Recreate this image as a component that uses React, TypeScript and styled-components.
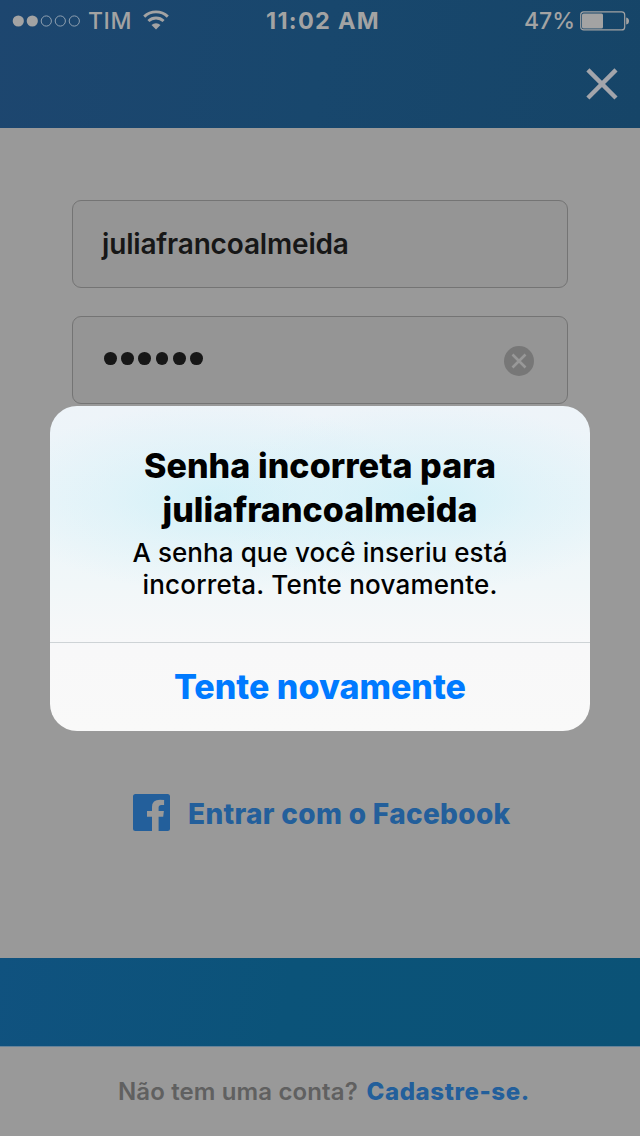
import React from "react";
import styled, { createGlobalStyle } from "styled-components";

const GlobalStyle = createGlobalStyle`
  * { box-sizing: border-box; }
  body { margin: 0; background: #999; }
`;

const Screen = styled.div`
  position: relative;
  display: flex;
  flex-direction: column;
  width: 640px;
  height: 1136px;
  overflow: hidden;
  background: #999;
  font-family: Inter, "Liberation Sans", sans-serif;
`;

const Header = styled.header`
  display: flex;
  flex-direction: column;
  height: 128px;
  background: linear-gradient(100deg, #1d466f 0%, #18476d 50%, #164568 100%);
`;

const StatusBar = styled.div`
  display: grid;
  grid-template-columns: 1fr auto 1fr;
  align-items: center;
  height: 41px;
  padding: 0 10px 0 12px;
  color: #a3a3a3;
`;

const StatusGroup = styled.div<{ $end?: boolean }>`
  display: flex;
  align-items: center;
  justify-content: ${(p) => (p.$end ? "flex-end" : "flex-start")};
`;

const StatusText = styled.span<{ $spacing?: number }>`
  font-size: 23px;
  font-weight: 500;
  letter-spacing: ${(p) => p.$spacing ?? 0}px;
  line-height: 40px;
  white-space: nowrap;
`;

const Clock = styled.span`
  padding-left: 4px;
  font-size: 23.5px;
  font-weight: 700;
  letter-spacing: 1.25px;
  line-height: 40px;
  white-space: nowrap;
`;

const Signal = styled.svg`
  width: 69px;
  height: 12px;
  margin-right: 7px;
`;

const Wifi = styled.svg`
  width: 26px;
  height: 20px;
  margin-left: 11px;
  margin-bottom: 1px;
`;

const Battery = styled.svg`
  width: 50px;
  height: 20px;
  margin-left: 5px;
`;

const HeaderActions = styled.div`
  display: flex;
  justify-content: flex-end;
  padding: 27px 22px 0 0;
`;

const CloseIcon = styled.svg`
  width: 32px;
  height: 32px;
`;

const Form = styled.main`
  display: flex;
  flex-direction: column;
  align-items: center;
  height: 830px;
  padding-top: 72px;
`;

const Field = styled.div`
  display: flex;
  align-items: center;
  justify-content: space-between;
  width: 496px;
  height: 88px;
  margin-bottom: 28px;
  padding: 0 33px 0 29px;
  border: 1px solid #747474;
  border-radius: 9px;
  background: #959595;
`;

const FieldValue = styled.span`
  color: #171717;
  font-size: 28px;
  font-weight: 600;
  letter-spacing: -0.17px;
  line-height: 34px;
  padding-bottom: 1px;
`;

const PasswordDots = styled.div`
  display: flex;
  gap: 4.4px;
  padding: 0 0 3px 2px;
`;

const Dot = styled.i`
  width: 12.8px;
  height: 12.8px;
  border-radius: 50%;
  background: #171717;
`;

const ClearIcon = styled.svg`
  width: 30px;
  height: 30px;
  margin-top: 1px;
`;

const FacebookLogin = styled.div`
  display: flex;
  align-items: center;
  gap: 17px;
  width: 374px;
  height: 38px;
  margin-top: 361px;
`;

const FacebookIcon = styled.svg`
  flex: none;
  width: 37px;
  height: 37px;
`;

const FacebookLabel = styled.span`
  color: #235f9b;
  font-size: 28px;
  font-weight: 800;
  letter-spacing: 0.32px;
  line-height: 34px;
  white-space: nowrap;
  padding: 4px 0 0 1px;
`;

const BlueBand = styled.div`
  height: 88px;
  background: linear-gradient(100deg, #10527f 0%, #0b5379 45%, #0b5276 100%);
`;

const Footer = styled.footer`
  display: flex;
  align-items: baseline;
  height: 90px;
  padding: 30px 0 0 118px;
  border-top: 1px solid #66839a;
  font-size: 24px;
  line-height: 30px;
  white-space: nowrap;
`;

const FooterText = styled.span`
  width: 248.5px;
  color: #606060;
  font-weight: 600;
  letter-spacing: 0.13px;
`;

const FooterLink = styled.span`
  color: #235f9b;
  font-weight: 800;
  letter-spacing: 0.6px;
`;

const Alert = styled.section`
  position: absolute;
  left: 50px;
  top: 406px;
  display: flex;
  flex-direction: column;
  width: 540px;
  height: 325px;
  overflow: hidden;
  border-radius: 27px;
  text-align: center;
  background:
    radial-gradient(ellipse 215px 95px at 375px 92px, rgba(205, 240, 248, 0.8), rgba(210, 240, 248, 0.4) 50%, rgba(225, 243, 249, 0)),
    radial-gradient(ellipse 215px 95px at 165px 92px, rgba(205, 240, 248, 0.8), rgba(210, 240, 248, 0.4) 50%, rgba(225, 243, 249, 0)),
    linear-gradient(#eef4f9 0%, #ebf5f9 30%, #f1f7f9 55%, #f8f8f9 75%, #f9f9f9 100%);
`;

const AlertBody = styled.div`
  display: flex;
  flex-direction: column;
  height: 237px;
  padding-top: 38px;
  border-bottom: 1px solid #ced3d6;
`;

const AlertTitle = styled.div<{ $spacing: number }>`
  color: #000;
  font-size: 34px;
  font-weight: 800;
  letter-spacing: ${(p) => p.$spacing}px;
  line-height: 44px;
`;

const AlertMessage = styled.div<{ $spacing: number }>`
  color: #000;
  font-size: 26px;
  font-weight: 500;
  letter-spacing: ${(p) => p.$spacing}px;
  line-height: 32px;
  position: relative;
  top: 5px;
`;

const AlertButton = styled.div`
  color: #007aff;
  font-size: 34px;
  font-weight: 800;
  letter-spacing: 0;
  line-height: 88px;
`;

export default function App() {
  return (
    <>
      <GlobalStyle />
      <Screen>
        <Header>
          <StatusBar>
            <StatusGroup>
              <Signal viewBox="0 0 69 12">
                {[0, 1].map((i) => (
                  <circle key={i} cx={6.3 + i * 14} cy={6} r={5.6} fill="#a3a3a3" />
                ))}
                {[2, 3, 4].map((i) => (
                  <circle key={i} cx={6.3 + i * 14} cy={6} r={5.1} fill="none" stroke="#8fa0b0" strokeWidth={1} />
                ))}
              </Signal>
              <StatusText $spacing={0.6}>TIM</StatusText>
              <Wifi viewBox="0 0 26 20">
                <path d="M1.2 6.6 A17.2 17.2 0 0 1 24.8 6.6" fill="none" stroke="#a3a3a3" strokeWidth="2.9" />
                <path d="M5.4 11 A11.2 11.2 0 0 1 20.6 11" fill="none" stroke="#a3a3a3" strokeWidth="2.9" />
                <path d="M8.5 15 A6.6 6.6 0 0 1 17.5 15 L13 19.4 Z" fill="#a3a3a3" />
              </Wifi>
            </StatusGroup>
            <Clock>11:02 AM</Clock>
            <StatusGroup $end>
              <StatusText>47%</StatusText>
              <Battery viewBox="0 0 50 20">
                <rect x="0.7" y="0.9" width="44" height="18" rx="3" fill="none" stroke="#a3a3a3" strokeWidth="1.2" />
                <rect x="2" y="2.4" width="21" height="15" rx="1.5" fill="#a3a3a3" />
                <path d="M46.2 6.5 Q49 7 49 10 Q49 13 46.2 13.5 Z" fill="#a3a3a3" />
              </Battery>
            </StatusGroup>
          </StatusBar>
          <HeaderActions>
            <CloseIcon viewBox="0 0 32 32">
              <path d="M1.9 1.9 L30 30 M30 1.9 L1.9 30" stroke="#a3a5ab" strokeWidth="4.4" />
            </CloseIcon>
          </HeaderActions>
        </Header>

        <Form>
          <Field>
            <FieldValue>juliafrancoalmeida</FieldValue>
          </Field>
          <Field>
            <PasswordDots>
              {Array.from({ length: 6 }, (_, i) => (
                <Dot key={i} />
              ))}
            </PasswordDots>
            <ClearIcon viewBox="0 0 30 30">
              <circle cx="15" cy="15" r="15" fill="#777" />
              <path d="M8.5 8.5 L21.5 21.5 M21.5 8.5 L8.5 21.5" stroke="#989898" strokeWidth="2.6" />
            </ClearIcon>
          </Field>
          <FacebookLogin>
            <FacebookIcon viewBox="0 0 37 37">
              <path
                d="M2.5 0 H34.5 Q37 0 37 2.5 V34.5 Q37 37 34.5 37 H25.6 V22.7 H30.2 L30.9 17.1 H25.6 V13.6 Q25.6 11 28.4 11 H31.1 V6 Q29.4 5.8 27 5.8 Q19 5.8 19 13 V17.1 H14 V22.7 H19 V37 H2.5 Q0 37 0 34.5 V2.5 Q0 0 2.5 0 Z"
                fill="#235f9b"
              />
            </FacebookIcon>
            <FacebookLabel>Entrar com o Facebook</FacebookLabel>
          </FacebookLogin>
        </Form>

        <BlueBand />
        <Footer>
          <FooterText>Não tem uma conta?</FooterText>
          <FooterLink>Cadastre-se.</FooterLink>
        </Footer>

        <Alert>
          <AlertBody>
            <AlertTitle $spacing={0.09}>Senha incorreta para</AlertTitle>
            <AlertTitle $spacing={0.05}>juliafrancoalmeida</AlertTitle>
            <AlertMessage $spacing={0.08}>A senha que você inseriu está</AlertMessage>
            <AlertMessage $spacing={0.22}>incorreta. Tente novamente.</AlertMessage>
          </AlertBody>
          <AlertButton>Tente novamente</AlertButton>
        </Alert>
      </Screen>
    </>
  );
}
